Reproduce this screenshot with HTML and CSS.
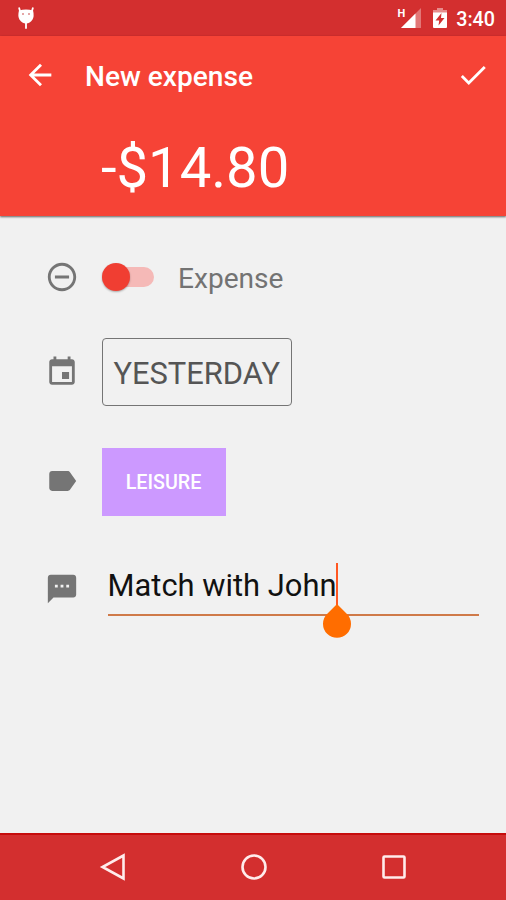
FILE: index.html
```
<!DOCTYPE html>
<html lang="en">
<head>
  <meta charset="utf-8">
  <title>New expense</title>
  <link rel="stylesheet" href="styles.css">
</head>
<body>
  <div class="statusbar">
    <svg class="debug" width="18" height="24" viewBox="0 0 18 24">
      <path d="M3 4L2.200 1.200M15 4l.8-2.800M9 15v6" stroke="#fff" stroke-width="1.800" stroke-linecap="round"/>
      <path d="M2 3.500Q9 1.500 16 3.500Q17.500 9 15.500 12.500Q13 16.500 9 16.500Q5 16.500 2.500 12.500Q.5 9 2 3.500z" fill="#fff"/>
      <circle cx="6" cy="7" r="1" fill="#d88"/>
      <circle cx="12" cy="7" r="1" fill="#d88"/>
    </svg>
    <div class="status-right">
      <span class="network">H</span>
      <svg class="signal" width="20" height="20" viewBox="0 0 20 20">
        <path d="M20 0v20H0z" fill="#fff" opacity=".35"/>
        <path d="M14.500 5.500V20H0z" fill="#fff"/>
      </svg>
      <svg class="battery" width="14" height="20" viewBox="0 0 14 20">
        <path d="M4 0h6v2h4v3H0V2h4z" fill="#fff" opacity=".45"/>
        <path d="M0 4.500h14V19q0 1-1 1H1q-1 0-1-1z" fill="#fff"/>
        <path d="M8.500 5L2.500 12.500h3.700L5.500 17.500L11.500 10H8z" fill="#d32f2f"/>
      </svg>
      <span class="clock">3:40</span>
    </div>
  </div>

  <header>
    <div class="toolbar">
      <svg class="icon" viewBox="0 0 24 24"><path d="M20 11H7.830l5.590-5.590L12 4l-8 8 8 8 1.410-1.410L7.830 13H20v-2z"/></svg>
      <h1>New expense</h1>
      <svg class="icon" viewBox="0 0 24 24"><path d="M9 16.170L4.830 12l-1.420 1.410L9 19 21 7l-1.410-1.410z"/></svg>
    </div>
    <div class="amount">-$14.80</div>
  </header>

  <main>
    <div class="row row-type">
      <svg class="icon" viewBox="0 0 24 24"><path d="M7 11v2h10v-2H7zm5-9C6.480 2 2 6.480 2 12s4.480 10 10 10 10-4.480 10-10S17.520 2 12 2zm0 18c-4.410 0-8-3.590-8-8s3.590-8 8-8 8 3.590 8 8-3.590 8-8 8z"/></svg>
      <div class="switch"><div class="thumb"></div></div>
      <span class="type-label">Expense</span>
    </div>
    <div class="row row-date">
      <svg class="icon" viewBox="0 0 24 24"><path d="M17 12h-5v5h5v-5zM16 1v2H8V1H6v2H5c-1.110 0-1.990.9-1.990 2L3 19c0 1.100.89 2 2 2h14c1.100 0 2-.9 2-2V5c0-1.100-.9-2-2-2h-1V1h-2zm3 18H5V8h14v11z"/></svg>
      <button class="date">YESTERDAY</button>
    </div>
    <div class="row row-category">
      <svg class="icon" viewBox="0 0 24 24"><path d="M17.630 5.840C17.270 5.330 16.670 5 16 5L5 5.010C3.900 5.010 3 5.900 3 7v10c0 1.100.9 1.990 2 1.990L16 19c.67 0 1.270-.33 1.630-.84L22 12l-4.370-6.160z"/></svg>
      <button class="category">LEISURE</button>
    </div>
    <div class="row row-note">
      <svg class="icon" viewBox="0 0 24 24"><path d="M20 2H4c-1.100 0-1.990.9-1.990 2L2 22l4-4h14c1.100 0 2-.9 2-2V4c0-1.100-.9-2-2-2zM9 11H7V9h2v2zm4 0h-2V9h2v2zm4 0h-2V9h2v2z"/></svg>
      <div class="note">
        <span class="note-text">Match with John</span>
        <span class="caret">
          <svg class="handle" width="28" height="34" viewBox="0 0 28 34"><path d="M14 0L24 10A14 14 0 1 1 4 10z" fill="#ff6d00"/></svg>
        </span>
      </div>
    </div>
  </main>

  <nav>
    <svg width="28" height="28" viewBox="0 0 28 28"><path d="M24.500 2.500v23L3.500 14z"/></svg>
    <svg width="28" height="28" viewBox="0 0 28 28"><circle cx="14" cy="14" r="11.500"/></svg>
    <svg width="28" height="28" viewBox="0 0 28 28"><rect x="3.500" y="3.500" width="21" height="21" rx="1"/></svg>
  </nav>
</body>
</html>
```
FILE: styles.css
```
* {
  box-sizing: border-box;
}
body {
  margin: 0;
  height: 900px;
  display: flex;
  flex-direction: column;
  overflow: hidden;
  font-family: Roboto, "Liberation Sans", sans-serif;
  background: #f1f1f1;
}
.statusbar {
  height: 36px;
  padding: 0 11px 0 17px;
  background: #d32f2f;
  color: #fff;
  display: flex;
  justify-content: space-between;
  align-items: center;
}
.debug {
  margin-top: 1px;
}
.status-right {
  display: flex;
  align-items: center;
}
.network {
  font-size: 11px;
  font-weight: 700;
  line-height: 10px;
  margin: -9px -4px 0 0;
}
.signal {
  margin-right: 12px;
}
.battery {
  margin-right: 9px;
}
.clock {
  font-size: 19.7px;
  font-weight: 500;
  line-height: 36px;
  margin-top: 3px;
}
.icon {
  width: 34px;
  height: 34px;
  flex: none;
  fill: #757575;
}

header {
  height: 180px;
  background: #f64336;
  color: #fff;
  box-shadow: 0 1px 2px rgba(0, 0, 0, 0.6);
}
.toolbar {
  height: 78px;
  padding: 0 16px 0 23px;
  display: flex;
  align-items: center;
}
.toolbar .icon {
  fill: #fff;
}
h1 {
  margin: 3px auto 0 28px;
  font-size: 28.1px;
  font-weight: 500;
  line-height: 34px;
}
.amount {
  padding-left: 101px;
  font-size: 56.2px;
  line-height: 66px;
  margin-top: 21px;
}

main {
  flex: 1;
  padding: 30px 27px 0 45px;
}
.row {
  display: flex;
  align-items: center;
}
.row-type {
  height: 62px;
}
.switch {
  width: 50px;
  height: 20px;
  margin: 0 24px 0 25px;
  border-radius: 10px;
  background: #f5b9b7;
  display: flex;
  align-items: center;
}
.thumb {
  width: 28px;
  height: 28px;
  flex: none;
  margin-left: -2px;
  border-radius: 50%;
  background: #f03e32;
  box-shadow: 0 1px 2px rgba(0, 0, 0, 0.3);
}
.type-label {
  font-size: 28.1px;
  line-height: 34px;
  padding-top: 3px;
  color: #737373;
}
.row-date {
  height: 68px;
  margin-top: 30px;
}
.row-date .icon {
  margin-top: -1px;
}
button {
  margin: 0 0 0 22.5px;
  padding: 0;
  height: 68px;
  font-family: inherit;
}
.date {
  width: 190.5px;
  border: 1px solid #757575;
  border-radius: 4px;
  background: none;
  font-size: 30.9px;
  padding-top: 2px;
  color: #555;
}
.row-category {
  height: 68px;
  margin-top: 41.5px;
}
.row-category .icon {
  margin-top: -1px;
}
.category {
  width: 124px;
  border: 0;
  background: #cc99ff;
  color: #fff;
  font-size: 19.7px;
  font-weight: 500;
  padding-top: 1px;
}
.row-note {
  height: 53px;
  margin-top: 47.5px;
  align-items: stretch;
}
.row-note .icon {
  margin-top: 9px;
}
.note {
  flex: 1;
  margin-left: 28.5px;
  border-bottom: 2px solid #cf7a49;
  display: flex;
}
.note-text {
  font-size: 30.9px;
  line-height: 46px;
  color: #111;
}
.caret {
  position: relative;
  width: 2px;
  height: 43px;
  background: #ff5722;
}
.handle {
  position: absolute;
  left: -13px;
  top: 41px;
}

nav {
  height: 67px;
  padding: 0 98px 2px 99px;
  border-top: 2px solid #c60c0c;
  background: #d32f2f;
  display: flex;
  align-items: center;
  justify-content: space-between;
}
nav svg {
  fill: none;
  stroke: #ffecec;
  stroke-width: 2.6;
}
```
